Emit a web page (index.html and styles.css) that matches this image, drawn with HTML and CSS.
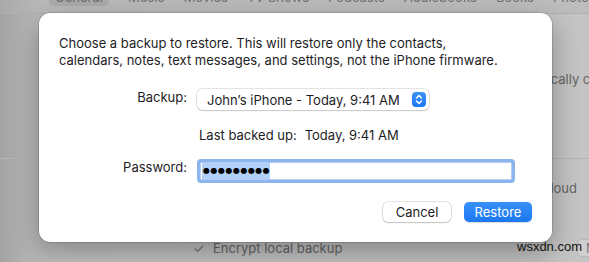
FILE: index.html
```html
<!DOCTYPE html>
<html>
<head>
<meta charset="utf-8">
<link rel="stylesheet" href="styles.css">
</head>
<body>
<div class="window">
  <div class="tabbar">
    <span class="tab selected">General</span>
    <span class="tab">Music</span>
    <span class="tab">Movies</span>
    <span class="tab">TV Shows</span>
    <span class="tab">Podcasts</span>
    <span class="tab">Audiobooks</span>
    <span class="tab">Books</span>
    <span class="tab">Photos</span>
  </div>
  <div class="panel">
    <div class="bg-row auto">Automatically check for an update</div>
    <div class="bg-sep"></div>
    <div class="bg-row icloud">Back up your most important data on your iPhone to iCloud</div>
    <div class="bg-row encrypt">
      <span class="check">✓</span><span>Encrypt local backup</span>
      <span class="bg-spacer"></span>
      <span class="bg-button">Manage Backups…</span>
    </div>
  </div>

  <div class="sheet">
    <p class="message">Choose a backup to restore. This will restore only the contacts, calendars, notes, text messages, and settings, not the iPhone firmware.</p>
    <div class="form">
      <div class="label row-backup">Backup:</div>
      <div class="popup row-backup">
        <span class="popup-text">John’s iPhone - Today, 9:41 AM</span>
        <span class="stepper">
          <svg width="14" height="15" viewBox="0 0 14 15">
            <path d="M4.5 6 L7 3.5 L9.5 6" fill="none" stroke="#fff" stroke-width="1.5" stroke-linecap="round" stroke-linejoin="round"/>
            <path d="M4.5 9 L7 11.5 L9.5 9" fill="none" stroke="#fff" stroke-width="1.5" stroke-linecap="round" stroke-linejoin="round"/>
          </svg>
        </span>
      </div>
      <div class="label row-last"></div>
      <div class="last row-last"><span>Last backed up:</span><span>Today, 9:41 AM</span></div>
      <div class="label row-pass">Password:</div>
      <div class="field row-pass"><span class="selected-dots">●●●●●●●●●</span></div>
    </div>
    <div class="buttons">
      <button class="btn cancel">Cancel</button>
      <button class="btn restore">Restore</button>
    </div>
  </div>

  <div class="watermark">wsxdn.com</div>
</div>
</body>
</html>
```

FILE: styles.css
```css
* { box-sizing: border-box; }
html, body {
  margin: 0;
  padding: 0;
}
body {
  width: 589px;
  height: 262px;
  overflow: hidden;
  font-family: "Inter", "Liberation Sans", Arial, sans-serif;
  font-size: 13px;
  color: #1d1d1f;
}
.window {
  position: relative;
  width: 589px;
  height: 262px;
  overflow: hidden;
  background: linear-gradient(to right, #a2a2a2 0px, #b6b6b6 30px, #c2c2c2 60px, #c4c4c4 100%);
}
.tabbar {
  height: 14px;
  display: flex;
  align-items: flex-end;
  gap: 19px;
  padding-left: 49px;
  background: linear-gradient(to right, #a9a9a9 0px, #b9b9b9 40px, #bdbdbd 100%);
  border-bottom: 1px solid #b0b0b0;
  white-space: nowrap;
  overflow: hidden;
}
.tab {
  color: #707070;
  line-height: 16px;
  margin-bottom: 8px;
  padding: 0;
  border-radius: 5px;
}
.tab.selected {
  background: #aaaaaa;
  color: #6a6a6a;
  padding: 0 6px;
  margin-bottom: 7px;
  line-height: 17px;
}
.panel {
  display: flex;
  flex-direction: column;
}
.bg-row {
  color: #666;
  line-height: 16px;
  white-space: nowrap;
}
.auto {
  margin-top: 57px;
  padding-left: 496px;
}
.bg-sep {
  margin-top: 71px;
  height: 1px;
  background: #b4b4b4;
}
.icloud {
  margin-top: 21px;
  text-align: right;
  padding-right: 12px;
}
.encrypt {
  margin-top: 44px;
  padding-left: 193px;
  display: flex;
  align-items: center;
}
.check {
  width: 20px;
  color: #6a6a6a;
}
.bg-spacer { flex: 1; }
.bg-button {
  width: 100px;
  margin-right: -89px;
  height: 16px;
  line-height: 16px;
  border-radius: 4px;
  background: #cfcfcf;
  color: #777;
  padding-left: 8px;
  box-shadow: 0 0 0 0.5px #a9a9a9;
}

.sheet {
  position: absolute;
  left: 39px;
  top: 13px;
  width: 513px;
  height: 229px;
  background: #ffffff;
  border-radius: 11px;
  box-shadow: 0 10px 28px rgba(0,0,0,0.32), 0 0 0 0.5px rgba(0,0,0,0.25);
  padding: 22px 20px 20px 20px;
  display: flex;
  flex-direction: column;
}
.message {
  margin: 0;
  max-width: 450px;
  line-height: 17px;
  color: #1d1d1f;
}
.form {
  margin-top: 20px;
  display: grid;
  grid-template-columns: 128px 1fr;
  column-gap: 10px;
  align-items: center;
}
.label {
  text-align: right;
  color: #1d1d1f;
}
.row-backup { height: 21px; }
.row-last { height: 16px; margin-top: 17px; }
.row-pass { height: 24px; margin-top: 16px; }
.popup {
  width: 232px;
  display: flex;
  align-items: center;
  justify-content: space-between;
  padding: 0 3px 0 10px;
  background: #fff;
  border-radius: 5px;
  box-shadow: 0 0 0 0.5px rgba(0,0,0,0.22), 0 1px 1.5px rgba(0,0,0,0.12);
}
.popup-text {
  line-height: 16px;
}
.stepper {
  width: 14px;
  height: 15px;
  border-radius: 4px;
  background: linear-gradient(#3d90f7, #1b79f2);
  display: flex;
}
.last {
  display: flex;
  gap: 8px;
  padding-left: 2px;
  line-height: 16px;
}
.field {
  width: 318px;
  border: 3px solid #8cb5ef;
  border-radius: 4px;
  background: #fff;
  padding: 0 0 0 2px;
  display: flex;
  align-items: center;
  box-shadow: inset 0 0 0 0.5px #6c9ce0;
}
.selected-dots {
  background: #b2d1f8;
  font-family: "DejaVu Sans", sans-serif;
  font-size: 8px;
  letter-spacing: 0.5px;
  line-height: 16px;
  padding-left: 1px;
  color: #000;
}
.buttons {
  margin-top: auto;
  display: flex;
  justify-content: flex-end;
  gap: 13px;
}
.btn {
  font-family: "Inter", "Liberation Sans", Arial, sans-serif;
  font-size: 13px;
  height: 20px;
  width: 68px;
  border: none;
  border-radius: 5px;
  padding: 0;
  line-height: 20px;
}
.cancel {
  background: #fff;
  color: #1d1d1f;
  box-shadow: 0 0 0 0.5px rgba(0,0,0,0.22), 0 1px 1.5px rgba(0,0,0,0.14);
}
.restore {
  background: linear-gradient(#3890f8, #1a78f2);
  color: #fff;
  box-shadow: 0 0.5px 1px rgba(0,0,0,0.15);
}
.watermark {
  position: absolute;
  left: 517px;
  top: 239px;
  color: #111;
  line-height: 16px;
  font-family: "Liberation Sans", Arial, sans-serif;
  font-size: 13px;
}
```
